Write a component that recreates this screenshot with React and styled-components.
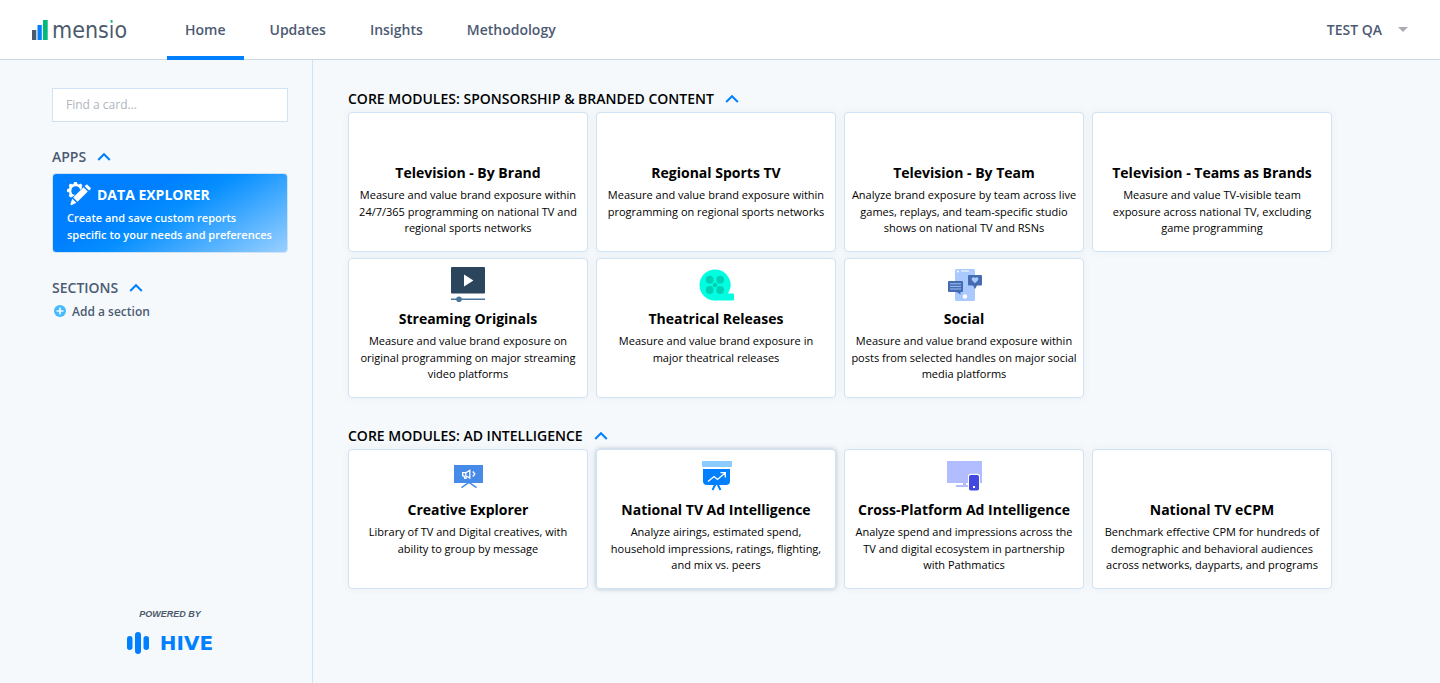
import React, { useState } from "react";
import styled, { createGlobalStyle, css } from "styled-components";

const GlobalStyle = createGlobalStyle`
  *, *::before, *::after { box-sizing: border-box; }
  body {
    margin: 0;
    background: #f5f9fc;
    color: #000;
    font-family: "Open Sans", "Noto Sans", sans-serif;
    font-size: 14px;
  }
  button, input { font-family: inherit; }
  button { cursor: pointer; }
`;

const Header = styled.header`
  display: flex;
  align-items: stretch;
  height: 60px;
  padding: 0 32px;
  background: #fff;
  border-bottom: 1px solid #cdd8e2;
`;

const Brand = styled.a`
  display: flex;
  align-items: center;
  gap: 4px;
  width: 135px;
  color: #4c5a6c;
  text-decoration: none;
`;

const BrandName = styled.span`
  font-family: "DejaVu Sans Condensed", "Open Sans", sans-serif;
  font-size: 23px;
  line-height: 30px;
`;

const BrandAccent = styled.span`
  background: linear-gradient(#00b97f 0 8px, #4c5a6c 8px);
  background-clip: text;
  color: transparent;
`;

const Nav = styled.nav`
  display: flex;
  gap: 8px;
`;

const NavLink = styled.a`
  display: flex;
  align-items: center;
  height: 60px;
  padding: 2px 18px 0;
  border-bottom: 4px solid ${(p) => (p.$active ? "#0080ff" : "transparent")};
  color: #4c5a73;
  font-size: 14px;
  font-weight: 600;
  text-decoration: none;
`;

const UserButton = styled.button`
  display: flex;
  align-items: center;
  gap: 16px;
  margin-left: auto;
  padding: 0;
  border: 0;
  background: none;
  color: #4c5a73;
  font-size: 14px;
  font-weight: 600;
`;

const Layout = styled.div`
  display: flex;
  min-height: calc(100vh - 60px);
`;

const Sidebar = styled.aside`
  display: flex;
  flex-direction: column;
  flex: none;
  width: 313px;
  padding: 28px 24px 28px 52px;
  border-right: 1px solid #d0e2f5;
`;

const SearchInput = styled.input`
  width: 100%;
  height: 34px;
  padding: 0 13px 2px;
  border: 1px solid #d0e2f5;
  border-radius: 0;
  background: #fff;
  color: #4c5a73;
  font-size: 12px;
  &::placeholder { color: #b0b6be; opacity: 1; }
`;

const SidebarSection = styled.section`
  margin-top: 22px;
`;

const headingText = css`
  margin: 0;
  font-size: 14px;
  font-weight: 600;
  line-height: 26px;
`;

const SidebarHeading = styled.h2`
  ${headingText}
  color: #4c5a73;
`;

const ModuleHeading = styled.h2`
  ${headingText}
`;

const CollapseButton = styled.button`
  display: flex;
  align-items: center;
  gap: 11px;
  padding: 0;
  border: 0;
  background: none;
  color: inherit;
  font: inherit;
`;

const AppCard = styled.a`
  display: block;
  height: 80px;
  margin-top: 3px;
  padding: 7px 14px;
  border: 1px solid #d0e2f5;
  border-radius: 4px;
  background: linear-gradient(150deg, #0080ff 0%, #0080ff 35%, #058fff 50%, #99d0ff 100%);
  color: #fff;
  text-decoration: none;
`;

const AppTitle = styled.span`
  display: flex;
  align-items: center;
  gap: 6px;
  height: 26px;
  margin-bottom: 2px;
  font-size: 14px;
  font-weight: 700;
`;

const AppText = styled.span`
  display: block;
  font-size: 11px;
  font-weight: 600;
  line-height: 17px;
  white-space: pre-line;
`;

const AddButton = styled.button`
  display: flex;
  align-items: center;
  gap: 6px;
  height: 20px;
  padding: 0 0 0 2px;
  border: 0;
  background: none;
  color: #4c5a73;
  font-size: 12px;
  font-weight: 600;
`;

const PoweredBy = styled.footer`
  display: flex;
  flex-direction: column;
  align-items: center;
  gap: 11px;
  margin-top: auto;
`;

const PoweredLabel = styled.span`
  color: #4c5a6c;
  font-family: "Liberation Sans", Arial, sans-serif;
  font-size: 9px;
  font-style: italic;
  font-weight: 700;
  line-height: 12px;
`;

const HiveLogo = styled.a`
  display: flex;
  align-items: center;
  gap: 11px;
  height: 24px;
  color: #0080ff;
  font-family: "DejaVu Sans", sans-serif;
  font-size: 20px;
  font-weight: 700;
  line-height: 24px;
  text-decoration: none;
`;

const Main = styled.main`
  display: flex;
  flex-direction: column;
  flex: 1;
  gap: 25px;
  min-width: 0;
  padding: 26px 35px 35px;
`;

const CardGrid = styled.div`
  display: grid;
  grid-template-columns: repeat(auto-fill, 240px);
  gap: 6px 8px;
`;

const Card = styled.a`
  display: flex;
  flex-direction: column;
  align-items: center;
  height: 140px;
  padding: 6px 4px;
  border: 1px solid #d0e2f5;
  border-radius: 4px;
  background: #fff;
  box-shadow: ${(p) =>
    p.$raised ? "0 0 5px rgba(60, 80, 110, 0.35)" : "0 0 8px rgba(60, 80, 110, 0.06)"};
  color: #000;
  text-align: center;
  text-decoration: none;
`;

const CardIcon = styled.span`
  display: flex;
  align-items: center;
  height: 40px;
`;

const CardTitle = styled.h3`
  margin: 4px 0;
  font-size: 14px;
  font-weight: 700;
  line-height: 20px;
`;

const CardText = styled.p`
  margin: 0;
  font-size: 11px;
  line-height: 1.5;
  white-space: pre-line;
`;

const Chevron = ({ open }) => (
  <svg width="14" height="10" viewBox="0 0 14 10" fill="none" stroke="#0080ff" strokeWidth="2" aria-hidden="true">
    <path d={open ? "M1.2 8 L7 2.2 L12.8 8" : "M1.2 2 L7 7.8 L12.8 2"} />
  </svg>
);

const StreamingIcon = () => (
  <svg width="34" height="36" viewBox="0 0 34 36" aria-hidden="true">
    <rect y="0" width="34" height="26.500" rx="1" fill="#2b455c" />
    <path d="M13 7.600v12l9.400-6z" fill="#fff" />
    <rect y="31.500" width="34" height="1.500" fill="#4a7499" />
    <circle cx="8" cy="32.300" r="2.800" fill="#4a7499" />
  </svg>
);

const ReelIcon = () => (
  <svg width="36" height="32" viewBox="-1 0 36 32" aria-hidden="true">
    <path d="M16 .5a15.500 15.500 0 1 0 0 31H34a1 1 0 0 0 1-1V25.500a1 1 0 0 0-1-1H29A15.500 15.500 0 0 0 16 .5z" fill="#00ffe0" />
    <g fill="#00d0b4">
      <circle cx="10.700" cy="10.700" r="3.900" />
      <circle cx="21.200" cy="10.700" r="3.900" />
      <circle cx="10.700" cy="21" r="3.900" />
      <circle cx="21.200" cy="21" r="3.900" />
      <circle cx="16" cy="16" r="2.300" />
    </g>
  </svg>
);

const SocialIcon = () => (
  <svg width="36" height="34" viewBox="-2 0 36 34" aria-hidden="true">
    <rect x="7" y="1" width="20" height="32" rx="1.500" fill="#a9c9ff" />
    <circle cx="10" cy="3.500" r="1" fill="#fff" />
    <rect x="13" y="2.500" width="8" height="1" rx=".5" fill="#fff" />
    <circle cx="17" cy="28.500" r="2.200" fill="#fff" />
    <path d="M1 13h13a1 1 0 0 1 1 1v9a1 1 0 0 1-1 1h-1.500v2.500L8.500 24H1a1 1 0 0 1-1-1v-9a1 1 0 0 1 1-1z" fill="#456cb0" />
    <path d="M2 15.800h11M2 18.400h11M2 21h11" stroke="#a9c9ff" strokeWidth=".9" />
    <path d="M21 7h12a1 1 0 0 1 1 1v8.500a1 1 0 0 1-1 1h-4L27 21l-2-3.500h-4a1 1 0 0 1-1-1V8a1 1 0 0 1 1-1z" fill="#456cb0" />
    <path d="M27 15.200l-3-3a1.800 1.800 0 0 1 3-2.200a1.800 1.800 0 0 1 3 2.200z" fill="#a9c9ff" />
  </svg>
);

const CreativeIcon = () => (
  <svg width="32" height="26" viewBox="-2 -2 32 26" fill="none" aria-hidden="true">
    <path d="M7.500 22.700L15 17.500l7.500 5.200" stroke="#468be8" strokeWidth="1.500" />
    <rect width="29" height="18" fill="#468be8" />
    <path d="M8.700 7.700v3.100h1.300l.8 2.500h1.200v-2.500l3.800 2.300V5.400l-4 2.300zM11.800 7.700v3M18.800 6.500l2 2.500-2 2.500" stroke="#fff" strokeWidth="1.300" />
  </svg>
);

const NationalIcon = () => (
  <svg width="32" height="30" viewBox="-2 0 32 30" fill="none" aria-hidden="true">
    <path d="M13.500 23L10.500 29M15.500 23l3 6" stroke="#0080ff" strokeWidth="2" />
    <rect width="30" height="6" rx="1" fill="#8ccbff" />
    <path d="M1 8h27v12a4 4 0 0 1-4 4H5a4 4 0 0 1-4-4z" fill="#0080ff" />
    <path d="M6 20.500l6-5 3.500 3 7.500-6.500M18.500 11.700h4.800v4.800" stroke="#fff" strokeWidth="1.300" />
  </svg>
);

const CrossPlatformIcon = () => (
  <svg width="36" height="30" viewBox="0 0 36 30" aria-hidden="true">
    <rect x="1" y="0" width="35" height="22" rx=".5" fill="#b1bdff" />
    <path d="M17 22h3v2h6v2H10v-2h7z" fill="#b1bdff" />
    <rect x="22" y="12.800" width="12" height="17.200" rx="2.500" fill="#fff" />
    <rect x="23" y="14" width="10" height="15.500" rx="1.800" fill="#4149e0" />
    <rect x="27" y="25" width="2" height="2" fill="#fff" />
  </svg>
);

const DataExplorerIcon = () => (
  <svg width="24" height="24" viewBox="0 0 24 24" aria-hidden="true">
    <path
      d="M4.600 15.300l-1.600 0-1.300-2 .9-1.300-.5-1.500L0 9.800V7.200l1.900-.7.600-1.400L1.700 3.300 3.400 1.600l1.800.8 1.300-.6L7.200 0h2.600l.7 1.900 1.400.5 1.800-.8 1.700 1.700-.8 1.800.5 1-2 2a4.400 4.400 0 1 0-5 5z"
      fill="#fff"
    />
    <path d="M6.200 15.500L16.500 5.300l4.300 4.300L10.500 19.800zM5.200 16.700l4.200 4.100-5 2.500-1-1zM17.600 4.200l1.500-1.400a1 1 0 0 1 1.400 0l3 3a1 1 0 0 1 0 1.400l-1.500 1.400z" fill="#fff" />
  </svg>
);

const modules = [
  {
    title: "CORE MODULES: SPONSORSHIP & BRANDED CONTENT",
    cards: [
      { title: "Television - By Brand", text: "Measure and value brand exposure within\n24/7/365 programming on national TV and\nregional sports networks" },
      { title: "Regional Sports TV", text: "Measure and value brand exposure within\nprogramming on regional sports networks" },
      { title: "Television - By Team", text: "Analyze brand exposure by team across live\ngames, replays, and team-specific studio\nshows on national TV and RSNs" },
      { title: "Television - Teams as Brands", text: "Measure and value TV-visible team\nexposure across national TV, excluding\ngame programming" },
      { title: "Streaming Originals", icon: StreamingIcon, text: "Measure and value brand exposure on\noriginal programming on major streaming\nvideo platforms" },
      { title: "Theatrical Releases", icon: ReelIcon, text: "Measure and value brand exposure in\nmajor theatrical releases" },
      { title: "Social", icon: SocialIcon, text: "Measure and value brand exposure within\nposts from selected handles on major social\nmedia platforms" },
    ],
  },
  {
    title: "CORE MODULES: AD INTELLIGENCE",
    cards: [
      { title: "Creative Explorer", icon: CreativeIcon, text: "Library of TV and Digital creatives, with\nability to group by message" },
      { title: "National TV Ad Intelligence", icon: NationalIcon, raised: true, text: "Analyze airings, estimated spend,\nhousehold impressions, ratings, flighting,\nand mix vs. peers" },
      { title: "Cross-Platform Ad Intelligence", icon: CrossPlatformIcon, text: "Analyze spend and impressions across the\nTV and digital ecosystem in partnership\nwith Pathmatics" },
      { title: "National TV eCPM", text: "Benchmark effective CPM for hundreds of\ndemographic and behavioral audiences\nacross networks, dayparts, and programs" },
    ],
  },
];

function ModuleCard({ title, text, icon: Icon, raised }) {
  return (
    <Card href="#" $raised={raised}>
      <CardIcon>{Icon && <Icon />}</CardIcon>
      <CardTitle>{title}</CardTitle>
      <CardText>{text}</CardText>
    </Card>
  );
}

function Collapsible({ heading: Heading, title, children }) {
  const [open, setOpen] = useState(true);
  return (
    <>
      <Heading>
        <CollapseButton type="button" aria-expanded={open} onClick={() => setOpen(!open)}>
          {title}
          <Chevron open={open} />
        </CollapseButton>
      </Heading>
      {open && children}
    </>
  );
}

export default function App() {
  return (
    <>
      <GlobalStyle />
      <Header>
        <Brand href="#">
          <svg width="16" height="20" viewBox="0 0 16 20" aria-hidden="true">
            <rect x="0" y="10" width="4.300" height="10" fill="#4c5a6c" />
            <rect x="5.500" y="5" width="4.300" height="15" fill="#0080ff" />
            <rect x="11" y="0" width="4.700" height="20" fill="#00b97f" />
          </svg>
          <BrandName>mens<BrandAccent>i</BrandAccent>o</BrandName>
        </Brand>
        <Nav>
          <NavLink href="#" $active aria-current="page">Home</NavLink>
          <NavLink href="#">Updates</NavLink>
          <NavLink href="#">Insights</NavLink>
          <NavLink href="#">Methodology</NavLink>
        </Nav>
        <UserButton type="button" aria-haspopup="menu">
          TEST QA
          <svg width="10" height="5" viewBox="0 0 10 5" aria-hidden="true">
            <path d="M0 0h10L5 5z" fill="#a9adb3" />
          </svg>
        </UserButton>
      </Header>
      <Layout>
        <Sidebar>
          <SearchInput type="search" aria-label="Find a card" placeholder="Find a card..." />
          <SidebarSection>
            <Collapsible heading={SidebarHeading} title="APPS">
              <AppCard href="#">
                <AppTitle>
                  <DataExplorerIcon />
                  DATA EXPLORER
                </AppTitle>
                <AppText>{"Create and save custom reports\nspecific to your needs and preferences"}</AppText>
              </AppCard>
            </Collapsible>
          </SidebarSection>
          <SidebarSection>
            <Collapsible heading={SidebarHeading} title="SECTIONS">
              <AddButton type="button">
                <svg width="12" height="12" viewBox="0 0 12 12" aria-hidden="true">
                  <circle cx="6" cy="6" r="6" fill="#45baff" />
                  <path d="M6 2.500v7M2.500 6h7" stroke="#f5f9fc" strokeWidth="1.600" />
                </svg>
                Add a section
              </AddButton>
            </Collapsible>
          </SidebarSection>
          <PoweredBy>
            <PoweredLabel>POWERED BY</PoweredLabel>
            <HiveLogo href="#">
              <svg width="22" height="22" viewBox="0 0 22 22" fill="#0080ff" aria-hidden="true">
                <rect x="0" y="4" width="5.500" height="14" rx="2.700" />
                <rect x="8" y="0" width="6" height="22" rx="3" />
                <rect x="16.500" y="4" width="5.500" height="14" rx="2.700" />
              </svg>
              HIVE
            </HiveLogo>
          </PoweredBy>
        </Sidebar>
        <Main>
          {modules.map((m) => (
            <section key={m.title}>
              <Collapsible heading={ModuleHeading} title={m.title}>
                <CardGrid>
                  {m.cards.map((c) => (
                    <ModuleCard key={c.title} {...c} />
                  ))}
                </CardGrid>
              </Collapsible>
            </section>
          ))}
        </Main>
      </Layout>
    </>
  );
}
